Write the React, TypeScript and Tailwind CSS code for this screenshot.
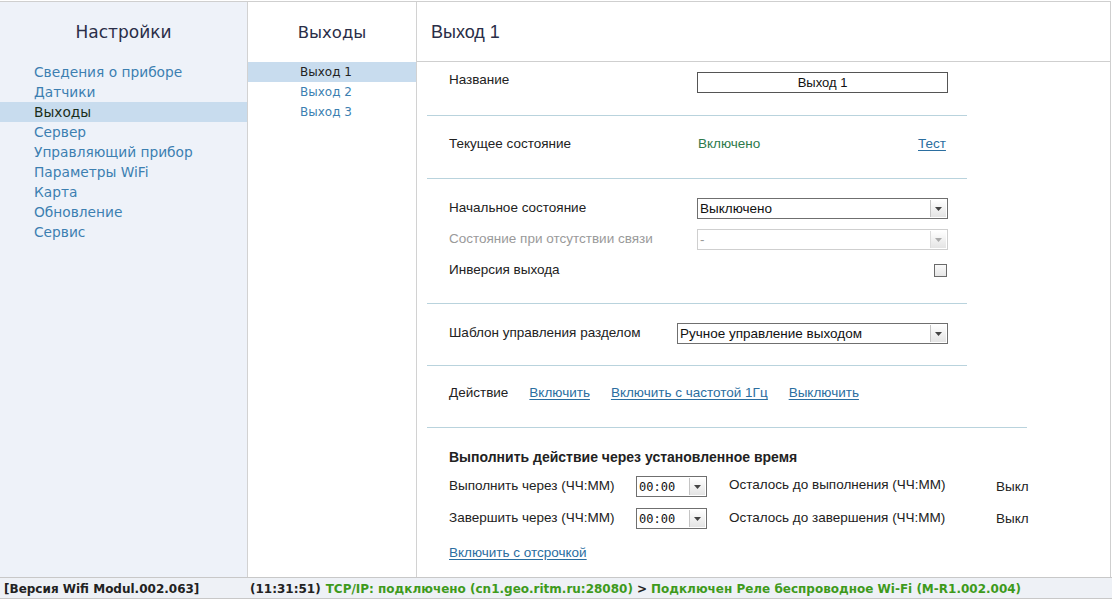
import React from "react";

const Arrow = ({ disabled }: { disabled?: boolean }) => (
  <div
    className={
      "absolute right-[1px] top-[1px] bottom-[1px] w-[16px] flex items-center justify-center border-l bg-gradient-to-b from-white to-[#e4e4e4] " +
      (disabled ? "border-[#dcdcdc]" : "border-[#c4c4c4]")
    }
  >
    <svg width="7" height="4" viewBox="0 0 7 4">
      <path d="M0 0 L7 0 L3.5 4 Z" fill={disabled ? "#aaa" : "#444"} />
    </svg>
  </div>
);

const Select = ({
  value,
  width,
  disabled,
  mono,
}: {
  value: string;
  width: string;
  disabled?: boolean;
  mono?: boolean;
}) => (
  <div
    className={
      "relative h-[21px] border flex items-center pl-[2px] " +
      width +
      (disabled ? " border-[#cfcfcf] text-[#999]" : " border-[#6f6f6f] text-[#111]") +
      (mono ? " font-['DejaVu_Sans_Mono',monospace] text-[12px]" : "")
    }
  >
    <span className="leading-none">{value}</span>
    <Arrow disabled={disabled} />
  </div>
);

const Sep = ({ w = "w-[540px]" }: { w?: string }) => <div className={"h-px bg-[#b9d3dd] " + w} />;

const Link = ({ children }: { children: React.ReactNode }) => (
  <span className="underline text-[#2b6ea0] underline-offset-2">{children}</span>
);

export default function App() {
  const nav = [
    "Сведения о приборе",
    "Датчики",
    "Выходы",
    "Сервер",
    "Управляющий прибор",
    "Параметры WiFi",
    "Карта",
    "Обновление",
    "Сервис",
  ];
  return (
    <div className="w-[1112px] h-[601px] bg-white flex flex-col overflow-hidden">
      <div className="flex flex-1 mt-[1px] border-t border-r border-[#cfcfcf] w-[1111px]">
        {/* Left nav */}
        <div className="w-[248px] bg-[#eef2f9] border-r border-[#d2d2d2] font-['DejaVu_Sans',sans-serif] flex flex-col">
          <div className="h-[60px] flex items-center justify-center text-[17px] text-[#2a2e48] pt-[2px]">
            Настройки
          </div>
          <div className="flex flex-col">
            {nav.map((n) => (
              <div
                key={n}
                className={
                  "h-[20px] flex items-center pl-[34px] pt-[1px] text-[13.75px] " +
                  (n === "Выходы" ? "bg-[#c8dcee] text-[#1a2e1a]" : "text-[#3c7fb1]")
                }
              >
                {n}
              </div>
            ))}
          </div>
        </div>
        {/* Middle */}
        <div className="w-[169px] border-r border-[#d2d2d2] font-['DejaVu_Sans',sans-serif] flex flex-col">
          <div className="h-[60px] flex items-center justify-center text-[16.5px] text-[#2a2e48] pt-[2px]">
            Выходы
          </div>
          <div className="flex flex-col">
            {["Выход 1", "Выход 2", "Выход 3"].map((n, i) => (
              <div
                key={n}
                className={
                  "h-[20px] flex items-center pl-[52px] text-[12px] " +
                  (i === 0 ? "bg-[#c8dcee] text-[#222]" : "text-[#3c7fb1]")
                }
              >
                {n}
              </div>
            ))}
          </div>
        </div>
        {/* Right */}
        <div className="flex-1 flex flex-col font-['Liberation_Sans',sans-serif] text-[13.5px] text-[#222]">
          <div className="h-[60px] border-b border-[#cfcfcf] flex items-center pl-[14px] text-[18px] text-[#2a2e48] pt-[2px]">
            Выход 1
          </div>
          <div className="pl-[10px] flex flex-col">
            {/* Section 1 */}
            <div className="h-[53px] pt-[10px] pl-[22px]">
              <div className="flex items-center h-[21px]">
                <div className="w-[248px] pb-[4px]">Название</div>
                <div className="w-[251px] h-[21px] border border-[#555] flex items-center justify-center text-[#111] text-[13px]">
                  Выход 1
                </div>
              </div>
            </div>
            <Sep />
            {/* Section 2 */}
            <div className="h-[62px] pl-[22px] flex items-center pb-[6px]">
              <div className="w-[249px]">Текущее состояние</div>
              <div className="w-[220px] text-[#2d7a4b] pt-[1px]">Включено</div>
              <div className="pt-[1px]">
                <Link>Тест</Link>
              </div>
            </div>
            <Sep />
            {/* Section 3 */}
            <div className="h-[124px] pl-[22px] pt-[19px] flex flex-col">
              <div className="flex items-center h-[21px]">
                <div className="w-[248px] pb-[1px]">Начальное состояние</div>
                <Select value="Выключено" width="w-[251px]" />
              </div>
              <div className="flex items-center h-[21px] mt-[10px]">
                <div className="w-[248px] text-[#9a9a9a] pb-[1px]">Состояние при отсутствии связи</div>
                <Select value="-" width="w-[251px]" disabled />
              </div>
              <div className="flex items-center h-[21px] mt-[10px]">
                <div className="w-[485px] pb-[1px]">Инверсия выхода</div>
                <div className="w-[13px] h-[13px] border border-[#6a6a6a] bg-gradient-to-b from-[#fafafa] to-[#e6e6e6]" />
              </div>
            </div>
            <Sep />
            {/* Section 4 */}
            <div className="h-[61px] pl-[22px] pt-[19px]">
              <div className="flex items-center h-[21px]">
                <div className="w-[228px] pb-[1px]">Шаблон управления разделом</div>
                <Select value="Ручное управление выходом" width="w-[271px]" />
              </div>
            </div>
            <Sep />
            {/* Section 5 */}
            <div className="h-[61px] pl-[22px] flex items-center gap-[21px] pb-[6px]">
              <span>Действие</span>
              <Link>Включить</Link>
              <Link>Включить с частотой 1Гц</Link>
              <Link>Выключить</Link>
            </div>
            <Sep w="w-[600px]" />
            {/* Section 6 */}
            <div className="pl-[22px] pt-[20px] flex flex-col">
              <div className="font-bold text-[14px] h-[18px] leading-[18px]">
                Выполнить действие через установленное время
              </div>
              <div className="flex items-center h-[21px] mt-[10px]">
                <div className="w-[187px] pb-[1px]">Выполнить через (ЧЧ:ММ)</div>
                <Select value="00:00" width="w-[71px]" mono />
                <div className="w-[289px] pl-[22px] pb-[3px]">Осталось до выполнения (ЧЧ:ММ)</div>
                <div className="pt-[1px]">Выкл</div>
              </div>
              <div className="flex items-center h-[21px] mt-[11px]">
                <div className="w-[187px] pb-[1px]">Завершить через (ЧЧ:ММ)</div>
                <Select value="00:00" width="w-[71px]" mono />
                <div className="w-[289px] pl-[22px]">Осталось до завершения (ЧЧ:ММ)</div>
                <div className="pt-[1px]">Выкл</div>
              </div>
              <div className="mt-[14px]">
                <Link>Включить с отсрочкой</Link>
              </div>
            </div>
          </div>
        </div>
      </div>
      {/* Status bar */}
      <div className="h-[22px] shrink-0 border-t border-b border-[#c8c8c8] bg-[#eef1f6] flex items-center font-['DejaVu_Sans',sans-serif] font-bold text-[12px] text-[#222] whitespace-nowrap mb-[2px] pt-[1px]">
        <span className="pl-[4px] w-[250px]">[Версия Wifi Modul.002.063]</span>
        <span>(11:31:51)</span>
        <span className="text-[#3e9a1c] ml-[5px]">TCP/IP: подключено (cn1.geo.ritm.ru:28080)</span>
        <span className="mx-[4px]">&gt;</span>
        <span className="text-[#3e9a1c]">Подключен Реле беспроводное Wi-Fi (M-R1.002.004)</span>
      </div>
    </div>
  );
}
